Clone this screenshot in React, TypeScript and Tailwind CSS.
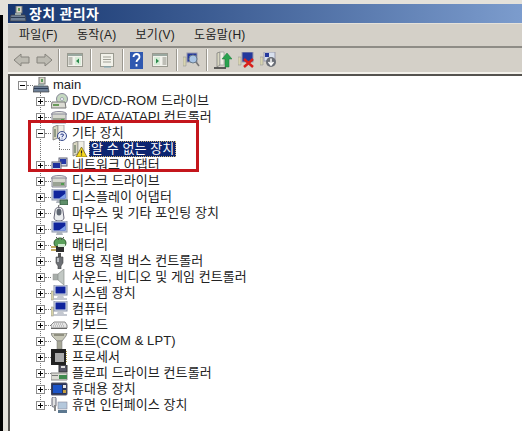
// App.tsx
import React from 'react';

type IconKind =
  | 'computer' | 'dvd' | 'ide' | 'unknown' | 'warn' | 'network' | 'disk' | 'display' | 'mouse'
  | 'monitor' | 'battery' | 'usb' | 'sound' | 'system' | 'keyboard' | 'port' | 'cpu' | 'floppy'
  | 'portable' | 'hid';

const TreeIcon = ({ kind }: { kind: IconKind }) => {
  const body = () => {
    switch (kind) {
      case 'computer':
        return (
          <>
            <rect x="6" y="0" width="6" height="7" fill="#d8d8c8" stroke="#777" />
            <rect x="8" y="2" width="2" height="3" fill="#5a9a5a" />
            <path d="M1 9h14l1 6H0z" fill="#6d7f96" stroke="#444" strokeWidth="0.7" />
            <rect x="1" y="11" width="14" height="1" fill="#2c3c55" />
            <rect x="5" y="7" width="6" height="2" fill="#9aa" />
          </>
        );
      case 'dvd':
        return (
          <>
            <circle cx="11" cy="6" r="5.5" fill="#c4d8c0" stroke="#889" />
            <circle cx="11" cy="6" r="1.5" fill="#fff" stroke="#668" strokeWidth="0.5" />
            <path d="M1 9h13l1 6H0z" fill="#dcdcd4" stroke="#777" />
            <rect x="2" y="11" width="6" height="2" fill="#6a9a5a" />
          </>
        );
      case 'ide':
      case 'disk':
        return (
          <>
            <ellipse cx="8" cy="5" rx="7.5" ry="2.5" fill="#e4e6de" stroke="#889" />
            <path d="M1 5h14v9H1z" fill="#d6d8ce" stroke="#889" />
            <rect x="2" y="9" width="12" height="4" fill="#9aa294" />
            <rect x="10" y="10" width="3" height="2" fill="#4f9a4f" />
          </>
        );
      case 'unknown':
      case 'warn':
        return (
          <>
            <path d="M2 2l5-2v13l-5 2z" fill="#d8d6c0" stroke="#777" strokeWidth="0.8" />
            <path d="M7 0h6v13H7z" fill="#efeee4" stroke="#999" strokeWidth="0.8" />
            <rect x="3" y="4" width="2" height="8" fill="#8f9a84" />
            {kind === 'unknown' ? (
              <>
                <circle cx="11" cy="11" r="4.5" fill="#e8ecf8" stroke="#36498a" />
                <path d="M9.5 9.6q1.5-1.4 3 0q.4 1-1.5 2v.6M11 13.6v.6" fill="none" stroke="#1e3080" strokeWidth="1" />
              </>
            ) : (
              <>
                <path d="M10.5 6l5.5 10H5z" fill="#f5d820" stroke="#6a5a10" strokeWidth="0.7" />
                <path d="M10.5 9.5v3M10.5 13.5v1" stroke="#222" strokeWidth="1.2" />
              </>
            )}
          </>
        );
      case 'network':
        return (
          <>
            <rect x="8" y="1" width="8" height="8" fill="#cfd8ea" stroke="#667" />
            <rect x="9" y="2" width="6" height="5" fill="#2438a8" />
            <rect x="1" y="5" width="9" height="8" fill="#cfd8ea" stroke="#667" />
            <rect x="2" y="6" width="7" height="5" fill="#1c2f9c" />
          </>
        );
      case 'display':
      case 'monitor':
        return (
          <>
            <rect x="1" y="0" width="15" height="11" fill="#ccd6ea" stroke="#8b94a8" />
            <path d="M2.5 1.5h12v8h-12z" fill="#10249c" />
            <path d="M8 9.500l6.500-5v5z" fill="#7fa0ea" />
            <path d="M6 11h5l1 3H5z" fill="#aeb4bc" />
            {kind === 'display' && <rect x="9" y="11" width="8" height="5" fill="#5f8f6a" stroke="#2f4f3a" strokeWidth="0.7" />}
          </>
        );
      case 'mouse':
        return (
          <>
            <path d="M8 0c-1 2-.5 3 0 3" fill="none" stroke="#555" />
            <path d="M4 6c0-5 8-5 8 0l1 7c0 4-10 4-10 0z" fill="#eceef0" stroke="#667" />
            <ellipse cx="8" cy="7" rx="2.500" ry="3.500" fill="#5c6470" />
          </>
        );
      case 'battery':
        return (
          <>
            <ellipse cx="9" cy="6" rx="6" ry="5" fill="#5aa05a" stroke="#2f5f2f" />
            <path d="M5 0l3 3M13 0l-3 3" stroke="#555" />
            <rect x="5" y="9" width="8" height="6" fill="#2f2f2f" />
            <path d="M0 10h5M0 13h5" stroke="#b09030" strokeWidth="1.4" />
            <rect x="7" y="7" width="7" height="3" fill="#cfe8cf" />
          </>
        );
      case 'usb':
        return (
          <>
            <rect x="7" y="0" width="3" height="4" fill="#555" />
            <path d="M5 4h7v6l-2 3v3H7v-3l-2-3z" fill="#6c6f74" stroke="#444" strokeWidth="0.6" />
            <rect x="6" y="5" width="2" height="4" fill="#b8bcc0" />
          </>
        );
      case 'sound':
        return (
          <>
            <rect x="2" y="5" width="5" height="6" fill="#a8aeaa" stroke="#999" strokeWidth="0.5" />
            <path d="M7 5l6-5v16l-6-5z" fill="#c2c8c4" stroke="#8a908c" strokeWidth="0.7" />
          </>
        );
      case 'system':
        return (
          <>
            <rect x="0" y="6" width="2.500" height="9" fill="#d8d4a8" stroke="#888" strokeWidth="0.5" />
            <rect x="3" y="0" width="13" height="10" fill="#dce2ee" stroke="#8b94a8" />
            <rect x="4.500" y="1.500" width="10" height="7" fill="#10249c" />
            <path d="M7 10h5l1 3h3v2H3v-2h3z" fill="#c4c8d0" />
          </>
        );
      case 'keyboard':
        return (
          <>
            <path d="M3 5h11l2 3v3H0V8z" fill="#e6e6e6" stroke="#8a8a8a" />
            <path d="M3 7h10M2 9h12" stroke="#9a9a9a" strokeDasharray="1 1" />
            <rect x="0" y="11" width="16" height="1" fill="#666" />
          </>
        );
      case 'port':
        return (
          <>
            <path d="M0 0h16l-1 3-4 5H6L1 3z" fill="#c8c8b8" stroke="#777" strokeWidth="0.7" />
            <rect x="3" y="1" width="10" height="2" fill="#8f8f80" />
            <rect x="6" y="8" width="5" height="8" fill="#a8a898" stroke="#777" strokeWidth="0.5" />
          </>
        );
      case 'cpu':
        return (
          <>
            <rect x="0" y="0" width="15" height="16" fill="#222" />
            <rect x="4" y="4" width="9" height="9" fill="#aaa" />
            <path d="M15.500 2v12" stroke="#b09a40" strokeDasharray="1 1" />
          </>
        );
      case 'floppy':
        return (
          <>
            <rect x="8" y="0" width="8" height="7" fill="#556" stroke="#333" />
            <rect x="10" y="1" width="4" height="2" fill="#ddd" />
            <path d="M0 8h16v7H0z" fill="#dcdcd4" stroke="#888" />
            <rect x="8" y="10" width="8" height="4" fill="#3f8a4f" />
            <rect x="1" y="10" width="6" height="1" fill="#777" />
          </>
        );
      case 'portable':
        return (
          <>
            <rect x="0" y="2" width="16" height="12" rx="1" fill="#28345c" stroke="#556" />
            <rect x="2" y="4" width="9" height="8" fill="#1c54c8" />
            <rect x="12" y="4" width="3" height="3" fill="#e8e8e8" />
            <rect x="12" y="9" width="3" height="3" fill="#c8a040" />
          </>
        );
      case 'hid':
        return (
          <>
            <rect x="1" y="0" width="4" height="10" rx="1.500" fill="#e0e0e0" stroke="#667" />
            <rect x="3" y="8" width="2" height="6" fill="#888" />
            <rect x="7" y="5" width="9" height="7" fill="#b4c8dc" stroke="#889" strokeWidth="0.6" />
            <path d="M7 13h9v3H7z" fill="#5c7890" />
          </>
        );
    }
  };
  return (
    <svg width="17" height="16" viewBox="0 0 17 16" className="shrink-0">
      {body()}
    </svg>
  );
};

const ExpandBox = ({ open }: { open: boolean }) => (
  <span className="relative block h-[9px] w-[9px] shrink-0 border border-[#8b8b8b] bg-white">
    <span className="absolute left-[1px] top-[3px] h-px w-[5px] bg-black" />
    {!open && <span className="absolute left-[3px] top-[1px] h-[5px] w-px bg-black" />}
  </span>
);

const Dash = () => <span className="h-0 w-[6px] shrink-0 border-t border-dotted border-[#777]" />;

const rows: { label: string; icon: IconKind; open?: boolean }[] = [
  { label: 'DVD/CD-ROM 드라이브', icon: 'dvd' },
  { label: 'IDE ATA/ATAPI 컨트롤러', icon: 'ide' },
  { label: '기타 장치', icon: 'unknown', open: true },
  { label: '네트워크 어댑터', icon: 'network' },
  { label: '디스크 드라이브', icon: 'disk' },
  { label: '디스플레이 어댑터', icon: 'display' },
  { label: '마우스 및 기타 포인팅 장치', icon: 'mouse' },
  { label: '모니터', icon: 'monitor' },
  { label: '배터리', icon: 'battery' },
  { label: '범용 직렬 버스 컨트롤러', icon: 'usb' },
  { label: '사운드, 비디오 및 게임 컨트롤러', icon: 'sound' },
  { label: '시스템 장치', icon: 'system' },
  { label: '컴퓨터', icon: 'system' },
  { label: '키보드', icon: 'keyboard' },
  { label: '포트(COM & LPT)', icon: 'port' },
  { label: '프로세서', icon: 'cpu' },
  { label: '플로피 드라이브 컨트롤러', icon: 'floppy' },
  { label: '휴대용 장치', icon: 'portable' },
  { label: '휴면 인터페이스 장치', icon: 'hid' },
];

const Sep = () => <span className="mx-[5px] h-[22px] w-[2px] shrink-0 border-l border-[#9a978f] bg-white" />;

const ArrowIcon = ({ right }: { right?: boolean }) => (
  <svg width="17" height="14" viewBox="0 0 17 14" className="shrink-0">
    <path
      d={right ? 'M1 4h8V1l7 6-7 6v-3H1z' : 'M16 4H8V1L1 7l7 6v-3h8z'}
      fill="#bdbbb2"
      stroke="#85837c"
    />
  </svg>
);

const WinIcon = ({ side }: { side: 'left' | 'right' }) => (
  <svg width="16" height="14" viewBox="0 0 16 14" className="shrink-0">
    <rect x="0.500" y="0.500" width="15" height="13" fill="#f2f2ec" stroke="#9a9a90" />
    <rect x="1" y="1" width="14" height="2" fill="#9aa8a0" />
    {side === 'left' ? (
      <>
        <path d="M1.500 5h4M1.500 7h4M1.500 9h4M1.500 11h4" stroke="#8a8a80" />
        <path d="M8 4h6v8H8z" fill="#d8ecd8" />
        <path d="M12 5.500v5L9 8z" fill="#2d8a4d" />
      </>
    ) : (
      <>
        <path d="M10.500 5h4M10.500 7h4M10.500 9h4M10.500 11h4" stroke="#8a8a80" />
        <path d="M2 4h6v8H2z" fill="#d8ecd8" />
        <path d="M4 5.500v5L7 8z" fill="#2d8a4d" />
      </>
    )}
  </svg>
);

const ToolIcons = () => (
  <div className="flex h-full items-center pl-[5px]">
    <ArrowIcon />
    <span className="w-[6px]" />
    <ArrowIcon right />
    <Sep />
    <span className="ml-[2px]"><WinIcon side="left" /></span>
    <span className="w-[2px]" />
    <Sep />
    <svg width="16" height="16" viewBox="0 0 16 16" className="ml-[2px] shrink-0">
      <rect x="1.500" y="1.500" width="13" height="13" fill="#f2f2ea" stroke="#9a9a90" />
      <path d="M4 5h8M4 7.500h8M4 10h8" stroke="#a0a096" />
      <path d="M5 15h7" stroke="#7aa8b8" />
    </svg>
    <span className="w-[2px]" />
    <Sep />
    <svg width="13" height="17" viewBox="0 0 13 17" className="ml-[1px] shrink-0">
      <rect width="13" height="17" fill="#2f58b0" />
      <path d="M3.500 5c0-4 6-4 6 0 0 2.500-3 2.500-3 5M6.500 12v2.500" fill="none" stroke="#fff" strokeWidth="1.800" />
    </svg>
    <span className="w-[9px]" />
    <WinIcon side="right" />
    <span className="w-[3px]" />
    <Sep />
    <svg width="17" height="16" viewBox="0 0 17 16" className="shrink-0">
      <path d="M0 5h3v9H0z" fill="#d8d4b0" stroke="#999" strokeWidth="0.6" />
      <rect x="4" y="1" width="10" height="9" fill="#24389c" stroke="#99a" />
      <circle cx="10" cy="7" r="4" fill="#a8c4e4" stroke="#6a7a8a" />
      <path d="M13 10l3 4" stroke="#777" strokeWidth="1.500" />
    </svg>
    <span className="w-[1px]" />
    <Sep />
    <svg width="18" height="18" viewBox="0 0 18 18" className="ml-[1px] shrink-0">
      <path d="M3 2l3-1v13l-3 2z" fill="#d8d6c0" stroke="#777" strokeWidth="0.7" />
      <path d="M6 1h4v13H6z" fill="#efeee4" stroke="#999" strokeWidth="0.7" />
      <path d="M13 2l5 6h-3v8h-4V8H8z" fill="#2aa34f" stroke="#1c7a3a" strokeWidth="0.5" />
      <path d="M0 17h12" stroke="#333" strokeWidth="1.500" />
    </svg>
    <span className="w-[6px]" />
    <svg width="17" height="16" viewBox="0 0 17 16" className="shrink-0">
      <path d="M0 5h3v8H0z" fill="#d8d4b0" stroke="#999" strokeWidth="0.6" />
      <rect x="4" y="0" width="11" height="10" fill="#24389c" stroke="#99a" />
      <path d="M6 7l9 8M15 7l-9 8" stroke="#d8201c" strokeWidth="2.500" />
    </svg>
    <span className="w-[5px]" />
    <svg width="17" height="16" viewBox="0 0 17 16" className="shrink-0">
      <path d="M0 5h3v8H0z" fill="#d8d4b0" stroke="#999" strokeWidth="0.6" />
      <rect x="4" y="0" width="11" height="9" fill="#d8e0ee" stroke="#99a" />
      <rect x="5" y="1" width="4" height="4" fill="#24389c" />
      <circle cx="11" cy="10" r="5" fill="#6a6e76" />
      <path d="M11 6.500v6M8.500 10l2.500 3 2.500-3" fill="none" stroke="#fff" strokeWidth="1.500" />
    </svg>
  </div>
);

const App: React.FC = () => {
  return (
    <div
      className="relative h-[431px] w-[522px] overflow-hidden bg-[#e4e1da] text-[13px] leading-[16px] text-black"
      style={{ fontFamily: '"Liberation Sans", "Noto Sans CJK KR", sans-serif' }}
    >
      <div className="absolute bottom-0 left-0 top-[15px] w-[3px] bg-black" />
      <div className="flex h-full flex-col pl-[8px] pt-[4px]">
        {/* title bar */}
        <div className="flex h-[19px] shrink-0 items-center bg-gradient-to-r from-[#17366f] to-[#7c9ccd] pl-[2px]">
          <TreeIcon kind="computer" />
          <span className="ml-[2px] text-[14px] font-bold tracking-[0.3px] text-white">장치 관리자</span>
        </div>

        {/* menu bar */}
        <div className="mt-[1px] flex h-[24px] shrink-0 items-center gap-[19px] border-b-2 border-b-[#8e8c86] bg-[#d4d0c8] pl-[11px] text-[12px] tracking-[0.3px] text-[#222]">
          <span>파일(F)</span>
          <span>동작(A)</span>
          <span>보기(V)</span>
          <span>도움말(H)</span>
        </div>

        {/* toolbar */}
        <div className="h-[24px] shrink-0 bg-[#d4d0c8]">
          <ToolIcons />
        </div>
        <div className="h-[2px] shrink-0 bg-[#f4f2ec]" />
        <div className="h-[2px] shrink-0 bg-[#55534f]" />

        {/* device tree */}
        <div className="relative flex-1 border-l-2 border-l-[#55534f] bg-white pl-[8px] pt-[1px]">
          <div className="absolute bottom-[27px] left-[30px] top-[16px] border-l border-dotted border-[#777]" />
          <div className="relative flex h-[16px] items-center">
            <ExpandBox open />
            <Dash />
            <TreeIcon kind="computer" />
            <span className="ml-[3px] text-[#222]">main</span>
          </div>
          {rows.map((row) => (
            <React.Fragment key={row.label}>
              <div className="relative flex h-[16px] items-center pl-[18px]">
                <ExpandBox open={!!row.open} />
                <Dash />
                <TreeIcon kind={row.icon} />
                <span className="ml-[4px] whitespace-nowrap tracking-[0.07px] text-[#222]">{row.label}</span>
              </div>
              {row.open && (
                <div className="relative flex h-[16px] items-center pl-[41px]">
                  <span className="absolute left-[41px] top-[-4px] h-[12px] border-l border-dotted border-[#777]" />
                  <span className="w-[11px] shrink-0 border-t border-dotted border-[#777]" />
                  <span className="ml-[1px]"><TreeIcon kind="warn" /></span>
                  <span className="ml-px h-[16px] whitespace-nowrap border border-dotted border-[#c8b070] bg-[#0c2470] px-px tracking-[0.07px] text-white leading-[14px]">알 수 없는 장치</span>
                </div>
              )}
            </React.Fragment>
          ))}
        </div>
      </div>

      {/* red annotation */}
      <div className="absolute left-[28px] top-[120px] h-[52px] w-[171px] border-[3px] border-[#c4161c]" />
    </div>
  );
};

export default App;
